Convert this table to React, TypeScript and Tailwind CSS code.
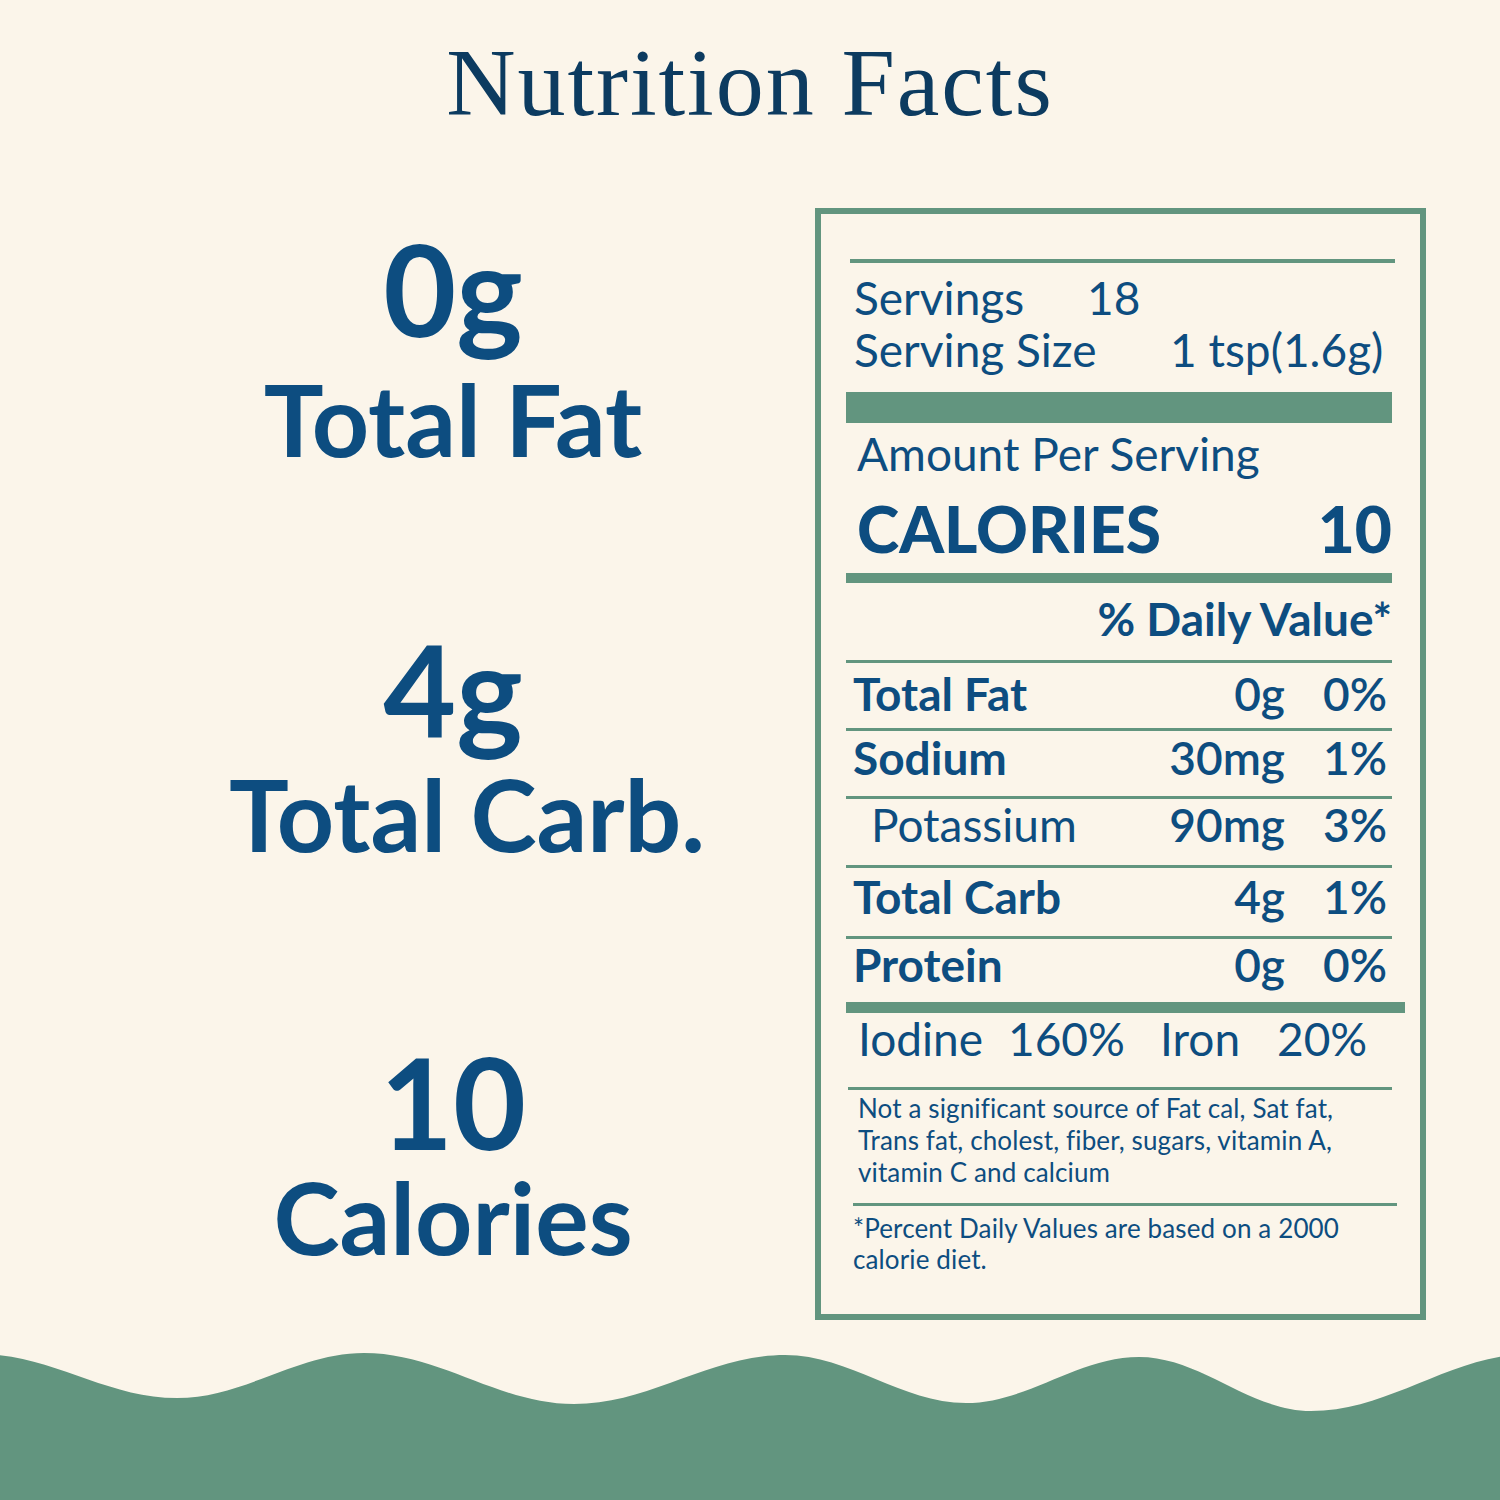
import React from "react";

const rows = [
  { label: "Total Fat", amount: "0g", pct: "0%", bold: true, h: "h-[68px]", pt: "pt-[8px]" },
  { label: "Sodium", amount: "30mg", pct: "1%", bold: true, h: "h-[68px]", pt: "pt-[4px]" },
  { label: "Potassium", amount: "90mg", pct: "3%", bold: false, h: "h-[69px]", pt: "pt-[3px]" },
  { label: "Total Carb", amount: "4g", pct: "1%", bold: true, h: "h-[71px]", pt: "pt-[6px]" },
  { label: "Protein", amount: "0g", pct: "0%", bold: true, h: "h-[66px]", pt: "pt-[3px]" },
];

function BigStat({ value, label, mt, gap }: { value: string; label: string; mt: string; gap: string }) {
  return (
    <div className={`flex flex-col items-center ${mt}`}>
      <div className="text-[126px] leading-[110px] font-bold">{value}</div>
      <div className={`text-[100px] leading-none font-bold ${gap}`}>{label}</div>
    </div>
  );
}

function Wave() {
  return (
    <svg className="block mt-auto" width="1500" height="160" viewBox="0 0 1500 160">
      <path
        fill="#62957f"
        d="M-20,14 C51,14 106,58 177,58 C244,58 297,13 364,13 C440,13 498,64 574,64 C650,64 709,15 785,15 C850,15 901,63 966,63 C1028,63 1077,17 1139,17 C1201,17 1249,71 1311,71 C1390,71 1451,14 1530,14 L1530,160 L-20,160 Z"
      />
    </svg>
  );
}

export default function App() {
  return (
    <div className="w-[1500px] h-[1500px] bg-[#fbf5ea] flex flex-col overflow-hidden font-['Lato',sans-serif] text-[#0d4d80]">
      <h1 className="pt-[35px] text-center text-[96px] leading-none tracking-[0.02em] text-[#0c3b60] font-['Liberation_Serif',serif]">
        Nutrition Facts
      </h1>

      <div className="flex mt-[77px]">
        {/* left column: big numbers */}
        <div className="w-[815px] pl-[91px] flex flex-col">
          <BigStat value="0g" label="Total Fat" mt="mt-[26px]" gap="mt-[24px]" />
          <BigStat value="4g" label="Total Carb." mt="mt-[166px]" gap="mt-[19px] ml-[28px]" />
          <BigStat value="10" label="Calories" mt="mt-[184px]" gap="mt-[9px]" />
        </div>

        {/* label card */}
        <div className="w-[611px] h-[1112px] border-[6px] border-[#62957f] pl-[25px] pr-[28px] flex flex-col">
          <div className="mt-[45px] h-[4px] bg-[#62957f] ml-[4px] mr-[-3px]" />

          <div className="mt-[12px] pl-[8px] text-[46px] leading-none flex">
            <span className="w-[233px]">Servings</span>
            <span>18</span>
          </div>
          <div className="mt-[6px] pl-[8px] text-[46px] leading-none flex">
            <span className="w-[316px]">Serving Size</span>
            <span>1 tsp(1.6g)</span>
          </div>

          <div className="mt-[19px] h-[31px] bg-[#62957f]" />

          <div className="mt-[8px] pl-[11px] text-[46px] leading-none">Amount Per Serving</div>

          <div className="mt-[20px] pl-[11px] flex justify-between text-[64px] leading-none font-black">
            <span>CALORIES</span>
            <span>10</span>
          </div>

          <div className="mt-[12px] h-[10px] bg-[#62957f]" />

          <div className="mt-[13px] text-right text-[46px] leading-none font-bold">% Daily Value*</div>

          <div className="mt-[18px] flex flex-col">
            {rows.map((r) => (
              <div
                key={r.label}
                className={`flex border-t-[3px] border-[#62957f] text-[46px] leading-none ${r.h} ${r.pt}`}
              >
                <span className={`flex-1 ${r.bold ? "font-bold pl-[7px]" : "font-normal pl-[25px]"}`}>{r.label}</span>
                <span className="w-[140px] text-right font-semibold">{r.amount}</span>
                <span className="w-[107px] pr-[5px] text-right font-semibold">{r.pct}</span>
              </div>
            ))}
          </div>

          <div className="h-[11px] bg-[#62957f] mr-[-13px]" />

          <div className="mt-[3px] pl-[12px] flex text-[46px] leading-none">
            <span className="w-[150px]">Iodine</span>
            <span className="w-[152px]">160%</span>
            <span className="w-[117px]">Iron</span>
            <span>20%</span>
          </div>

          <div className="mt-[25px] h-[3px] bg-[#62957f] ml-[2px]" />

          <p className="mt-[2px] pl-[12px] text-[26px] leading-[32px] tracking-[0.005em]">
            Not a significant source of Fat cal, Sat fat,
            <br />
            Trans fat, cholest, fiber, sugars, vitamin A,
            <br />
            vitamin C and calcium
          </p>

          <div className="mt-[15px] h-[3px] bg-[#62957f] ml-[7px] mr-[-5px]" />

          <p className="mt-[7px] pl-[7px] text-[26px] leading-[31px] tracking-[0.005em]">
            *Percent Daily Values are based on a 2000
            <br />
            calorie diet.
          </p>
        </div>
      </div>

      <Wave />
    </div>
  );
}
